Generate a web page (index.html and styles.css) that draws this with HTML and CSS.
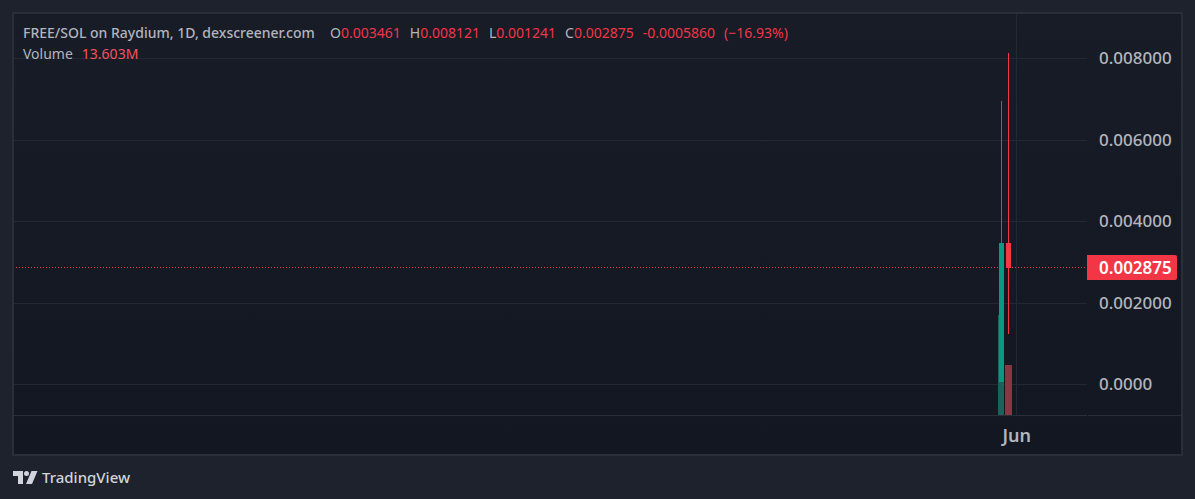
FILE: index.html
```html
<!DOCTYPE html>
<html lang="en">
<head>
  <meta charset="UTF-8">
  <meta name="viewport" content="width=device-width, initial-scale=1.0">
  <title>FREE/SOL on Raydium</title>
  <link rel="stylesheet" href="styles.css">
</head>
<body>

  <main class="chart">
    <div class="legend">
      <div class="legend-row">
        <span class="title">FREE/SOL on Raydium, 1D, dexscreener.com</span>
        <span>O<b>0.003461</b></span>
        <span>H<b>0.008121</b></span>
        <span>L<b>0.001241</b></span>
        <span>C<b>0.002875</b></span>
        <b>-0.0005860</b>
        <b>(−16.93%)</b>
      </div>
      <div class="legend-row">
        <span>Volume</span>
        <span class="volume">13.603M</span>
      </div>
    </div>

    <svg class="plot" role="img" aria-label="Daily candles">
      <!-- grid -->
      <g class="grid">
        <rect y="44" width="100%" height="1"/>
        <rect y="126" width="100%" height="1"/>
        <rect y="207" width="100%" height="1"/>
        <rect y="289" width="100%" height="1"/>
        <rect y="370" width="100%" height="1"/>
      </g>
      <line class="last-price" x1="2" y1="253.5" x2="100%" y2="253.5"/>
      <!-- candles are placed from the right edge -->
      <svg x="100%" overflow="visible">
        <rect class="grid" x="-71" y="0" width="1" height="401"/>
        <rect class="vol-up" x="-89" y="301" width="6" height="100"/>
        <rect class="vol-down" x="-82" y="351" width="7" height="50"/>
        <rect class="up" x="-86" y="87" width="1" height="142"/>
        <rect class="up" x="-88" y="229" width="5" height="139"/>
        <rect class="down" x="-79" y="39" width="1" height="281"/>
        <rect class="down" x="-81" y="229" width="5" height="25"/>
      </svg>
    </svg>

    <div class="price-axis">
      <span>0.008000</span>
      <span>0.006000</span>
      <span>0.004000</span>
      <span>0.002000</span>
      <span>0.0000</span>
      <strong class="price-tag">0.002875</strong>
    </div>

    <div class="time-axis"><span>Jun</span></div>
    <div class="corner"></div>
  </main>

  <footer>
    <svg class="logo" viewBox="0 0 25 13" aria-hidden="true">
      <path d="M0 0h10v13H5V5H0z"/>
      <circle cx="13.500" cy="2.500" r="2.500"/>
      <path d="M18.500 0H24.500L19 13H13z"/>
    </svg>
    <span>TradingView</span>
  </footer>

</body>
</html>
```
FILE: styles.css
```css
body {
  margin: 0;
  padding: 12px;
  background: #1e222d;
  color: #b2b5be;
  font-family: "Noto Sans", "Open Sans", sans-serif;
  font-size: 14px;
}

.chart {
  position: relative;
  display: grid;
  grid-template-columns: 1fr 94px;
  grid-template-rows: 401px 39px;
  border: 2px solid #2a2e39;
  background: linear-gradient(#181c27, #131722);
}

.legend {
  position: absolute;
  top: 8px;
  left: 9px;
}

.legend-row {
  display: flex;
  gap: 9px;
  line-height: 21px;
  white-space: nowrap;
}

.legend .title {
  min-width: 298px;
  font-weight: 500;
}

.legend b {
  font-weight: normal;
  color: #f23645;
}

.legend .volume {
  color: #f7525f;
}

.plot {
  display: block;
  width: 100%;
  height: 401px;
}

.grid {
  fill: #242832;
}

.last-price {
  stroke: #f23645;
  stroke-dasharray: 1 2;
}

.up {
  fill: #089981;
}

.down {
  fill: #f23645;
}

.vol-up {
  fill: #1a635b;
}

.vol-down {
  fill: #893643;
}

.price-axis {
  position: relative;
  display: flex;
  flex-direction: column;
  justify-content: space-between;
  padding: 31px 0 18px 12px;
  font-size: 17px;
  font-weight: 500;
  line-height: 26px;
}

.price-tag {
  position: absolute;
  top: 241px;
  left: 0;
  right: 4px;
  padding-left: 12px;
  border-radius: 0 2px 2px 0;
  background: #f23645;
  color: #fff;
  font-weight: 600;
  line-height: 25px;
}

.time-axis,
.corner {
  border-top: 1px solid #2a2e39;
}

.time-axis {
  padding-right: 56px;
  text-align: right;
  font-size: 18px;
  font-weight: 600;
  line-height: 38px;
}

.corner {
  margin-left: 1px;
}

footer {
  display: flex;
  align-items: center;
  gap: 4px;
  margin-top: 9px;
  padding-left: 1px;
  color: #d1d4dc;
  font-size: 15px;
  font-weight: 500;
  line-height: 24px;
}

.logo {
  width: 25px;
  height: 13px;
  fill: #d1d4dc;
}
```
